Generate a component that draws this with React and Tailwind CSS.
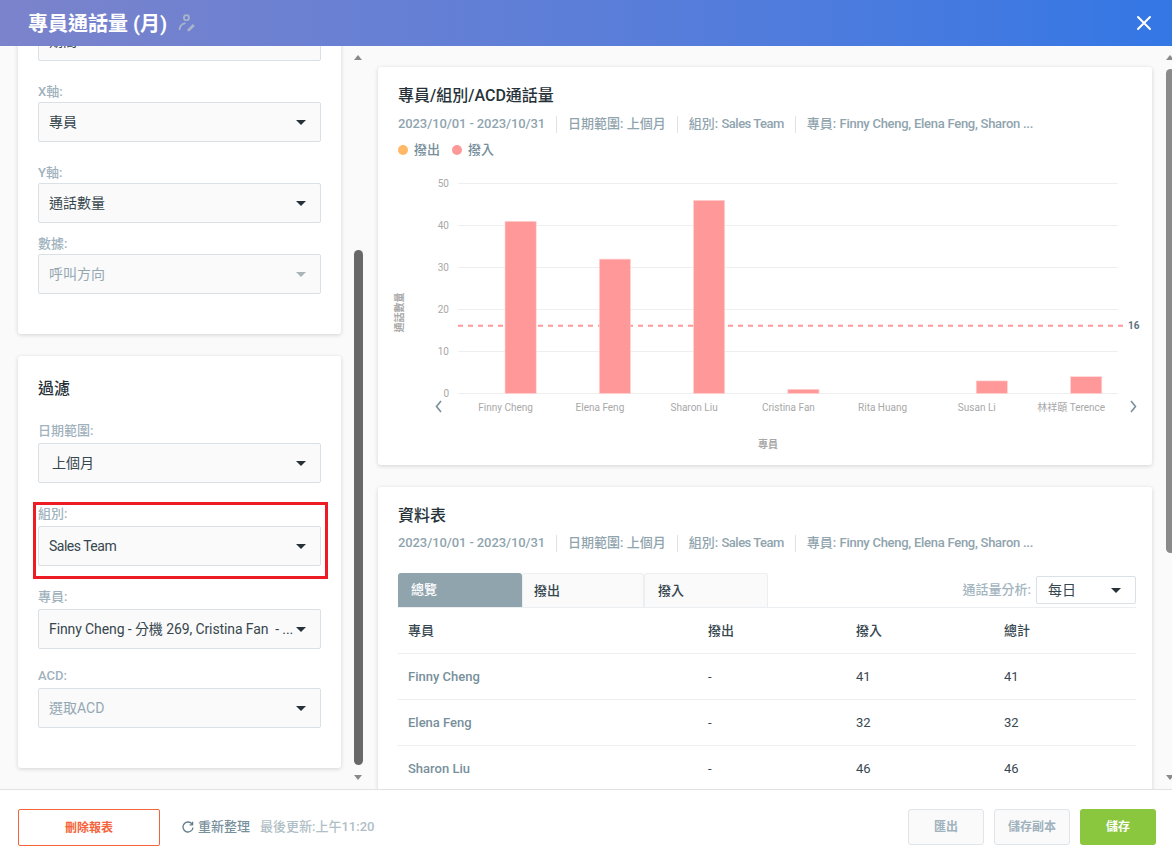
import React from "react";

function Caret({ muted }) {
  return (
    <span className={"block w-0 h-0 border-x-[5px] border-x-transparent border-t-[5px] " + (muted ? "border-t-[#a9b4ba]" : "border-t-[#263238]")} />
  );
}

function Select({ label, value, muted, textClass, labelClass }) {
  return (
    <div>
      <div className={"h-[22px] text-[13px] font-medium text-[#9fb2bd] " + (labelClass || "leading-[19px]")}>{label}</div>
      <div className="h-10 flex items-center justify-between pl-[10px] pr-[14px] bg-[#fafafa] border border-[#d9e1e6] rounded-[2px]">
        <span className={"text-[14px] pt-[1px] whitespace-pre " + (textClass || "") + (muted ? " text-[#94a8b4]" : " text-[#37474f]")}>{value}</span>
        <Caret muted={muted === "caret"} />
      </div>
    </div>
  );
}

function Meta() {
  return (
    <div className="flex items-center text-[13px] font-medium text-[#90a4ae] h-[18px]">
      <span className="tracking-[-0.1px]">2023/10/01 - 2023/10/31</span>
      <span className="w-px h-[17px] bg-[#dfe3e6] mx-[11px]" />
      <span>日期範圍: 上個月</span>
      <span className="w-px h-[17px] bg-[#dfe3e6] mx-[11px]" />
      <span>組別: <span className="tracking-[-0.5px]">Sales Team</span></span>
      <span className="w-px h-[17px] bg-[#dfe3e6] mx-[11px]" />
      <span>專員: <span className="tracking-[-0.27px]">Finny Cheng, Elena Feng, Sharon ...</span></span>
    </div>
  );
}

const bars = [
  { name: "Finny Cheng", v: 41, x: 505 },
  { name: "Elena Feng", v: 32, x: 599.3 },
  { name: "Sharon Liu", v: 46, x: 693.5 },
  { name: "Cristina Fan", v: 1, x: 787.8 },
  { name: "Rita Huang", v: 0, x: 882 },
  { name: "Susan Li", v: 3, x: 976.2 },
  { name: "林祥頤 Terence", v: 4, x: 1070.6 },
];

// svg coords are page coords minus the card's chart origin
function Chart() {
  const ox = 378;
  const oy = 165;
  const y0 = 393.5 - oy;
  return (
    <svg width="774" height="300" className="block mt-[6px]" fontFamily='Roboto, "Noto Sans CJK TC", sans-serif'>
      {[0, 10, 20, 30, 40, 50].map((t) => (
        <g key={t}>
          <line x1={458 - ox} x2={1118 - ox} y1={y0 - t * 4.2} y2={y0 - t * 4.2} stroke="#eeeeee" strokeWidth="1" />
          <text x={449 - ox} y={y0 - t * 4.2 + 3.5} textAnchor="end" fontSize="10" fill="#a8a8a8">{t}</text>
        </g>
      ))}
      <line x1={458 - ox} x2={1124 - ox} y1={325.7 - oy} y2={325.7 - oy} stroke="#ff9999" strokeWidth="2" strokeDasharray="5 5" />
      {bars.map((b) => (
        <g key={b.name}>
          <rect x={b.x - ox} y={y0 - b.v * 4.2} width="31.2" height={b.v * 4.2} fill="#ff9999" stroke="#ffd6d6" strokeWidth={b.v ? 0.6 : 0} />
          <text x={b.x + 0.6 - ox} y={y0 + 17} textAnchor="middle" fontSize="10" fill="#a8a8a8">{b.name}</text>
        </g>
      ))}
      <text x={1128 - ox} y={329 - oy} fontSize="10" fontWeight="700" fill="#5f7180">16</text>
      <text x={0} y={0} transform={`translate(${403 - ox} ${312.5 - oy}) rotate(-90)`} textAnchor="middle" fontSize="10" fontWeight="700" fill="#a8a8a8">通話數量</text>
      <text x={768 - ox} y={448 - oy} textAnchor="middle" fontSize="10" fontWeight="700" fill="#a8a8a8">專員</text>
      <path d={`M${441 - ox} ${401 - oy}l-4.5 5.5 4.5 5.5`} fill="none" stroke="#78909c" strokeWidth="1.6" />
      <path d={`M${1131 - ox} ${401 - oy}l4.5 5.5-4.5 5.5`} fill="none" stroke="#78909c" strokeWidth="1.6" />
    </svg>
  );
}

const rows = [
  ["Finny Cheng", "-", "41", "41"],
  ["Elena Feng", "-", "32", "32"],
  ["Sharon Liu", "-", "46", "46"],
];

function Scrollbar({ top, height, tone, widthClass }) {
  return (
    <div className={"shrink-0 relative bg-[#fafafa] " + widthClass}>
      <span className="absolute top-[9px] left-[1px] w-0 h-0 border-x-[4.5px] border-x-transparent border-b-[5px] border-b-[#8a8a8a]" />
      <div className={"absolute left-[1px] w-[9px] rounded-[5px] " + tone + " " + top + " " + height} />
      <span className="absolute bottom-[9px] left-[1px] w-0 h-0 border-x-[4.5px] border-x-transparent border-t-[5px] border-t-[#8a8a8a]" />
    </div>
  );
}

export default function App() {
  return (
    <div className="w-[1172px] h-[863px] flex flex-col overflow-hidden bg-[#fafafa] text-[#37474f] font-['Roboto','Noto_Sans_CJK_TC',sans-serif]">
      <header className="h-[46px] shrink-0 flex items-center justify-between pl-[28px] pr-[20px] bg-gradient-to-r from-[#7b83cb] to-[#3377e5]">
        <div className="flex items-center">
          <h1 className="text-[20px] pt-[1px] font-bold text-white">專員通話量 (月)</h1>
          <svg width="18" height="18" viewBox="0 0 17 17" fill="none" className="ml-[11px]" stroke="#a9b5c9" strokeWidth="1.6" strokeLinecap="round">
            <circle cx="8" cy="3.5" r="2.4" />
            <path d="M1.5 14.5c.3-3.2 2.2-5.2 5-5.7" />
            <path d="M9 14.5l5-5 1.8 1.8-5 5H9z" fill="#a9b5c9" stroke="none" />
          </svg>
        </div>
        <svg width="16" height="16" viewBox="0 0 16 16" stroke="white" strokeWidth="2" strokeLinecap="round">
          <path d="M2 2l12 12M14 2L2 14" />
        </svg>
      </header>

      <main className="flex-1 min-h-0 flex">
        {/* left settings column, scrolled part way down */}
        <div className="w-[353px] shrink-0 overflow-hidden pl-[18px] pr-[12px]">
          <div className="-mt-[31px]">
            <section className="h-[319px] bg-white rounded-[3px] shadow-[0_1px_4px_rgba(0,0,0,0.16)] px-[20px] pt-[6px]">
              <div className="h-10 bg-[#fafafa] border border-[#d9e1e6] rounded-[2px] flex items-center pl-[10px] text-[14px]">期間</div>
              <div className="mt-[19px]"><Select label="X軸:" value="專員" labelClass="leading-[23px]" /></div>
              <div className="mt-[19px]"><Select label="Y軸:" value="通話數量" labelClass="leading-[23px]" /></div>
              <div className="mt-[9px]"><Select label="數據:" value="呼叫方向" muted="caret" labelClass="leading-[23px]" /></div>
            </section>

            <section className="mt-[22px] h-[412px] bg-white rounded-[3px] shadow-[0_1px_4px_rgba(0,0,0,0.16)] px-[20px] pt-[22px]">
              <h2 className="text-[16px] leading-[22px] font-medium text-[#263238]">過濾</h2>
              <div className="mt-[21px]"><Select label="日期範圍:" value="上個月" textClass="pl-[3px]" /></div>
              <div className="mt-[21px] relative">
                <Select label="組別:" value="Sales Team" textClass="tracking-[-0.5px]" />
                <div className="absolute -left-[5px] -right-[7px] -top-[2px] -bottom-[13px] border-[3px] border-[#ed1c24]" />
              </div>
              <div className="mt-[21px]"><Select label="專員:" value="Finny Cheng - 分機 269, Cristina Fan  - ..." textClass="tracking-[-0.1px]" /></div>
              <div className="mt-[17px]"><Select label="ACD:" value="選取ACD" muted /></div>
            </section>
          </div>
        </div>

        <Scrollbar widthClass="w-[13px]" top="top-[204px]" height="h-[515px]" tone="bg-[#686868]" />

        {/* right report column */}
        <div className="w-[799px] shrink-0 overflow-hidden pl-[12px] pr-[13px] pt-[21px]">
          <section className="h-[398px] bg-white rounded-[3px] shadow-[0_1px_4px_rgba(0,0,0,0.16)] pt-[18px]">
            <div className="px-[20px]">
              <h2 className="text-[16px] leading-[22px] font-medium text-[#263238]">專員/組別/ACD通話量</h2>
              <div className="mt-[8px]"><Meta /></div>
              <div className="mt-[8px] flex items-center text-[13px] font-medium text-[#78909c] h-[18px]">
                <span className="w-[10px] h-[10px] rounded-full bg-[#ffb866] mr-[6px]" />
                <span>撥出</span>
                <span className="w-[10px] h-[10px] rounded-full bg-[#ff9999] ml-[12px] mr-[6px]" />
                <span>撥入</span>
              </div>
            </div>
            <Chart />
          </section>

          <section className="mt-[22px] h-[320px] bg-white rounded-[3px] shadow-[0_1px_4px_rgba(0,0,0,0.16)] pl-[20px] pr-[16px] pt-[18px]">
            <h2 className="text-[16px] leading-[22px] font-medium text-[#263238]">資料表</h2>
            <div className="mt-[7px]"><Meta /></div>
            <div className="mt-[21px] flex items-end justify-between h-[35px] border-b border-[#eceff1]">
              <div className="flex text-[13px] font-medium">
                <div className="w-[124px] h-[34px] pl-[13px] flex items-center rounded-t-[3px] bg-[#90a4ae] text-white">總覽</div>
                <div className="w-[122px] h-[34px] pl-[11px] flex items-center rounded-t-[3px] bg-[#fafafa] border border-b-0 border-[#eceff1]">撥出</div>
                <div className="w-[124px] h-[34px] pl-[13px] flex items-center rounded-t-[3px] bg-[#fafafa] border border-b-0 border-[#eceff1]">撥入</div>
              </div>
              <div className="flex items-center gap-[5px] mb-[3px]">
                <span className="text-[13px] font-medium text-[#a3b5bf]">通話量分析:</span>
                <div className="w-[100px] h-[28px] pl-[11px] pr-[14px] flex items-center justify-between bg-white border border-[#d9e1e6] rounded-[2px] text-[14px]">
                  <span>每日</span>
                  <Caret />
                </div>
              </div>
            </div>
            <table className="w-full table-fixed text-[13px]">
              <colgroup>
                <col className="w-[300px]" />
                <col className="w-[148px]" />
                <col className="w-[148px]" />
                <col />
              </colgroup>
              <thead>
                <tr className="h-[45px] border-b border-[#eceff1]">
                  <th className="pl-[10px] text-left font-medium">專員</th>
                  <th className="pl-[10px] text-left font-medium">撥出</th>
                  <th className="pl-[10px] text-left font-medium">撥入</th>
                  <th className="pl-[10px] text-left font-medium">總計</th>
                </tr>
              </thead>
              <tbody>
                {rows.map((r) => (
                  <tr key={r[0]} className="h-[46px] border-b border-[#eceff1]">
                    <td className="pl-[10px] pt-[1px] font-medium text-[#78909c]">{r[0]}</td>
                    <td className="pl-[10px] pt-[1px]">{r[1]}</td>
                    <td className="pl-[10px] pt-[1px]">{r[2]}</td>
                    <td className="pl-[10px] pt-[1px]">{r[3]}</td>
                  </tr>
                ))}
              </tbody>
            </table>
          </section>
        </div>

        <Scrollbar widthClass="w-[7px]" top="top-[23px]" height="h-[484px]" tone="bg-[#8a8a8a]" />
      </main>

      <footer className="h-[74px] shrink-0 bg-white border-t border-[#dfe3e6] flex items-center justify-between pl-[18px] pr-[16px]">
        <div className="flex items-center">
          <button className="w-[142px] h-[37px] mt-[2px] border border-[#f4633a] rounded-[2px] text-[12px] font-bold text-[#f4633a]">刪除報表</button>
          <svg width="12" height="12" viewBox="0 0 12 12" fill="none" stroke="#607d8b" strokeWidth="1.3" className="ml-[22px]">
            <path d="M10.3 3.4A5 5 0 1 0 11 6.5" />
            <path d="M10.6 0.8v3h-3" strokeLinejoin="round" />
          </svg>
          <span className="ml-[4px] text-[13px] font-medium text-[#78909c]">重新整理</span>
          <span className="ml-[10px] text-[13px] font-medium text-[#b0bec5]">最後更新:上午11:20</span>
        </div>
        <div className="flex gap-[10px] text-[12px] font-bold">
          <button className="w-[76px] h-[36px] bg-[#fafafa] border border-[#dfe5e8] rounded-[3px] text-[#9fb2bd]">匯出</button>
          <button className="w-[76px] h-[36px] bg-[#fafafa] border border-[#dfe5e8] rounded-[3px] text-[#9fb2bd]">儲存副本</button>
          <button className="w-[76px] h-[36px] bg-[#8bc63f] rounded-[3px] text-white">儲存</button>
        </div>
      </footer>
    </div>
  );
}
